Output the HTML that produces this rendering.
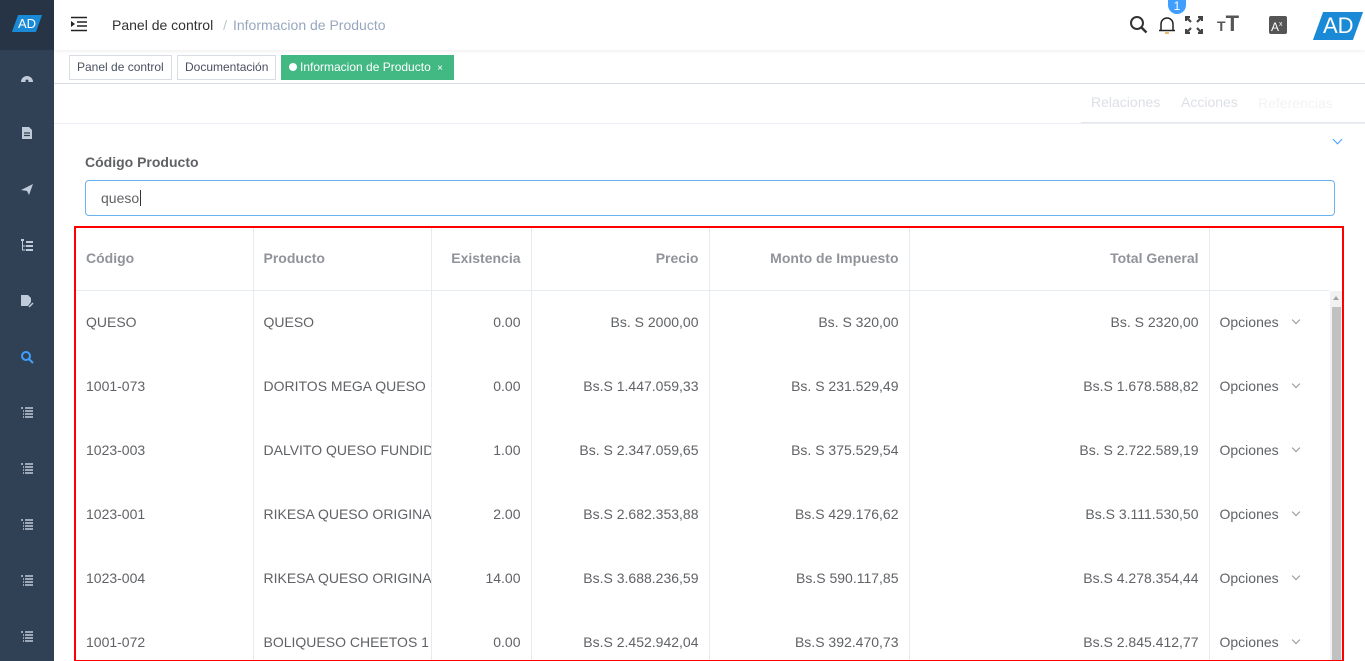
<!DOCTYPE html>
<html style="width:1365px;height:661px;overflow:hidden"><head><meta charset="utf-8"><style>
*{margin:0;padding:0;box-sizing:border-box}
body{width:1365px;height:661px;overflow:hidden;background:#fff;font-family:"Liberation Sans",sans-serif;position:relative;color:#606266}
.abs{position:absolute}
#side{left:0;top:0;width:54px;height:661px;background:#304156}
#logo{left:0;top:0;width:54px;height:50px;background:#263445}
.ad{position:absolute;background:#1a8ad6;transform:skewX(-20deg);color:#fff;text-align:center}
.ad span{display:inline-block;transform:skewX(20deg)}
.si{position:absolute;left:20px;width:14px;height:14px}
#hdr{left:54px;top:0;right:0;height:50px;background:#fff;box-shadow:0 1px 4px rgba(0,21,41,.08)}
.tag{position:absolute;top:55px;height:25px;border:1px solid #d8dce5;font-size:12px;line-height:23px;padding:0 7px;color:#495060;background:#fff}
#tw{position:absolute;left:76px;top:227px;width:1253px;height:434px;overflow:hidden}
table{border-collapse:collapse;font-size:14px;table-layout:fixed;width:1253px}
td,th{border-right:1px solid #e6ebf0;height:64px;padding:0 10px;white-space:nowrap;overflow:hidden;text-overflow:clip}
th{color:#909399;font-weight:bold;border-bottom:1px solid #e6ebf0;height:63px}
.r{text-align:right}
td{color:#606266}
.ch{display:inline-block;width:6px;height:6px;border-right:1px solid #909399;border-bottom:1px solid #909399;transform:rotate(45deg);margin-left:14px;position:relative;top:-4px}
</style></head><body>
<div id="side" class="abs"></div>
<div id="logo" class="abs"><div class="ad" style="left:15px;top:15px;width:24px;height:17px;font-size:13px;line-height:17px"><span>AD</span></div></div>
<svg class="si" style="top:71px" viewBox="0 0 14 14"><path d="M1 11A6 6 0 0 1 13 11Z" fill="#bfcbd9"/><circle cx="7" cy="10" r="1.5" fill="#304156"/></svg>
<svg class="si" style="top:126px" viewBox="0 0 14 14"><path d="M2 1h7l3 3v9H2z" fill="#bfcbd9"/><path d="M4 7h6M4 9.5h6" stroke="#304156" stroke-width="1.2"/></svg>
<svg class="si" style="top:182px" viewBox="0 0 14 14"><path d="M1 8L13 2L9 13L7 9Z" fill="#bfcbd9"/></svg>
<svg class="si" style="top:238px" viewBox="0 0 14 14"><path d="M1 1h3v2H1zM6 3h7v2H6zM6 7h7v2H6zM6 11h7v2H6z" fill="#bfcbd9"/><path d="M2.5 3v9h3M2.5 8h3" stroke="#bfcbd9" fill="none"/></svg>
<svg class="si" style="top:294px" viewBox="0 0 14 14"><path d="M1 1h7l3 3v4l-3 4H1z" fill="#bfcbd9"/><path d="M9 13l4-4" stroke="#bfcbd9" stroke-width="1.5"/></svg>
<svg class="si" style="top:350px" viewBox="0 0 14 14"><circle cx="6" cy="6" r="4" stroke="#409eff" stroke-width="2" fill="none"/><path d="M9 9l4 4" stroke="#409eff" stroke-width="2"/></svg>
<svg class="si" style="top:406px" viewBox="0 0 14 14"><path d="M1 2h2M5 2h8M3 5h1M5 5h8M3 8h1M5 8h8M3 11h1M5 11h8" stroke="#bfcbd9" stroke-width="1.4"/></svg>
<svg class="si" style="top:462px" viewBox="0 0 14 14"><path d="M1 2h2M5 2h8M3 5h1M5 5h8M3 8h1M5 8h8M3 11h1M5 11h8" stroke="#bfcbd9" stroke-width="1.4"/></svg>
<svg class="si" style="top:518px" viewBox="0 0 14 14"><path d="M1 2h2M5 2h8M3 5h1M5 5h8M3 8h1M5 8h8M3 11h1M5 11h8" stroke="#bfcbd9" stroke-width="1.4"/></svg>
<svg class="si" style="top:574px" viewBox="0 0 14 14"><path d="M1 2h2M5 2h8M3 5h1M5 5h8M3 8h1M5 8h8M3 11h1M5 11h8" stroke="#bfcbd9" stroke-width="1.4"/></svg>
<svg class="si" style="top:630px" viewBox="0 0 14 14"><path d="M1 2h2M5 2h8M3 5h1M5 5h8M3 8h1M5 8h8M3 11h1M5 11h8" stroke="#bfcbd9" stroke-width="1.4"/></svg>

<div id="hdr" class="abs"></div>
<svg class="abs" style="left:70px;top:16px" width="18" height="16" viewBox="0 0 18 16"><path d="M1 1.5h16M7 6h10M7 10h10M1 14.5h16" stroke="#222" stroke-width="1.6"/><path d="M1 5l4 3-4 3z" fill="#222"/></svg>
<div class="abs" style="left:112px;top:17px;font-size:14px;color:#303133">Panel de control <span style="color:#c0c4cc;margin:0 6px">/</span><span style="color:#97a8be">Informacion de Producto</span></div>
<svg class="abs" style="left:1129px;top:15px" width="20" height="20" viewBox="0 0 20 20"><circle cx="8" cy="8" r="6" stroke="#333" stroke-width="2" fill="none"/><path d="M12.5 12.5l5 5" stroke="#333" stroke-width="2.4"/></svg>
<svg class="abs" style="left:1158px;top:15px" width="18" height="20" viewBox="0 0 18 20"><path d="M3 15V9a6 6 0 0 1 12 0v6M1 15.5h16" stroke="#222" stroke-width="1.5" fill="none"/><path d="M7 18h4" stroke="#e6a23c" stroke-width="1.5"/></svg>
<div class="abs" style="left:1168px;top:0;width:18px;height:14px;background:#409eff;border-radius:0 0 9px 9px;color:#fff;font-size:12px;text-align:center;line-height:13px">1</div>
<svg class="abs" style="left:1185px;top:16px" width="18" height="18" viewBox="0 0 18 18" fill="none" stroke="#444" stroke-width="2.2"><path d="M1 5V1h4M13 1h4v4M17 13v4h-4M5 17H1v-4M2 2l4 4M16 2l-4 4M16 16l-4-4M2 16l4-4"/></svg>
<div class="abs" style="left:1217px;top:13px;font-size:22px;font-weight:bold;color:#555;line-height:22px"><span style="font-size:14px">T</span>T</div>
<div class="abs" style="left:1269px;top:16px;width:18px;height:18px;background:#555;border-radius:2px;color:#fff;font-size:12px;line-height:18px;padding-left:2px">A<sup style="font-size:7px">x</sup></div>
<div class="ad" style="left:1318px;top:12px;width:40px;height:28px;font-size:22px;line-height:28px"><span>AD</span></div>

<div class="abs" style="left:54px;top:50px;right:0;height:34px;border-bottom:1px solid #d8dce5"></div>
<div class="tag" style="left:69px">Panel de control</div>
<div class="tag" style="left:177px">Documentación</div>
<div class="tag" style="left:281px;width:173px;background:#42b983;border-color:#42b983;color:#fff;padding-left:7px"><span style="display:inline-block;width:8px;height:8px;border-radius:50%;background:#fff;margin-right:3px"></span>Informacion de Producto <span style="font-size:10px;margin-left:3px">×</span></div>

<div class="abs" style="left:54px;top:123px;right:0;height:1px;background:#ebeef5"></div>
<div class="abs" style="left:1081px;top:84px;width:284px;height:39px;border-bottom:1px solid #e4e7ed"></div>
<div class="abs" style="left:1091px;top:94px;font-size:14px;color:#dcdfe6">Relaciones</div>
<div class="abs" style="left:1181px;top:94px;font-size:14px;color:#dcdfe6">Acciones</div>
<div class="abs" style="left:1258px;top:95px;font-size:14px;color:#f2f3f5">Referencias</div>
<div class="abs" style="left:1334px;top:136px;width:7px;height:7px;border-right:1px solid #409eff;border-bottom:1px solid #409eff;transform:rotate(45deg)"></div>

<div class="abs" style="left:85px;top:154px;font-size:14px;font-weight:bold;color:#606266">Código Producto</div>
<div class="abs" style="left:85px;top:180px;width:1250px;height:36px;border:1px solid #6cb2ef;border-radius:4px;font-size:14px;line-height:34px;padding-left:15px;color:#606266">queso<span style="border-left:1px solid #333;margin-left:1px"></span></div>

<div id="tw"><table>
<colgroup><col style="width:177px"><col style="width:178px"><col style="width:100px"><col style="width:178px"><col style="width:200px"><col style="width:300px"><col style="width:120px"></colgroup>
<tr><th style="text-align:left">Código</th><th style="text-align:left">Producto</th><th class="r">Existencia</th><th class="r">Precio</th><th class="r">Monto de Impuesto</th><th class="r">Total General</th><th></th></tr>
<tr><td>QUESO</td><td>QUESO</td><td class="r">0.00</td><td class="r">Bs. S 2000,00</td><td class="r">Bs. S 320,00</td><td class="r">Bs. S 2320,00</td><td>Opciones<i class="ch"></i></td></tr>
<tr><td>1001-073</td><td>DORITOS MEGA QUESO</td><td class="r">0.00</td><td class="r">Bs.S 1.447.059,33</td><td class="r">Bs. S 231.529,49</td><td class="r">Bs.S 1.678.588,82</td><td>Opciones<i class="ch"></i></td></tr>
<tr><td>1023-003</td><td>DALVITO QUESO FUNDIDO</td><td class="r">1.00</td><td class="r">Bs. S 2.347.059,65</td><td class="r">Bs. S 375.529,54</td><td class="r">Bs. S 2.722.589,19</td><td>Opciones<i class="ch"></i></td></tr>
<tr><td>1023-001</td><td>RIKESA QUESO ORIGINAL</td><td class="r">2.00</td><td class="r">Bs.S 2.682.353,88</td><td class="r">Bs.S 429.176,62</td><td class="r">Bs.S 3.111.530,50</td><td>Opciones<i class="ch"></i></td></tr>
<tr><td>1023-004</td><td>RIKESA QUESO ORIGINAL</td><td class="r">14.00</td><td class="r">Bs.S 3.688.236,59</td><td class="r">Bs.S 590.117,85</td><td class="r">Bs.S 4.278.354,44</td><td>Opciones<i class="ch"></i></td></tr>
<tr><td>1001-072</td><td>BOLIQUESO CHEETOS 1</td><td class="r">0.00</td><td class="r">Bs.S 2.452.942,04</td><td class="r">Bs.S 392.470,73</td><td class="r">Bs.S 2.845.412,77</td><td>Opciones<i class="ch"></i></td></tr>
</table></div>
<div class="abs" style="left:1330px;top:291px;width:12px;height:370px;background:#f1f1f1"></div>
<div class="abs" style="left:1332px;top:307px;width:9px;height:354px;background:#c1c1c1"></div>
<div class="abs" style="left:1333px;top:296px;width:0;height:0;border:3px solid transparent;border-bottom:4px solid #a3a3a3;border-top:0"></div>
<div class="abs" style="left:74px;top:226px;width:1270px;height:436px;border:2px solid #f00"></div>
</body></html>
